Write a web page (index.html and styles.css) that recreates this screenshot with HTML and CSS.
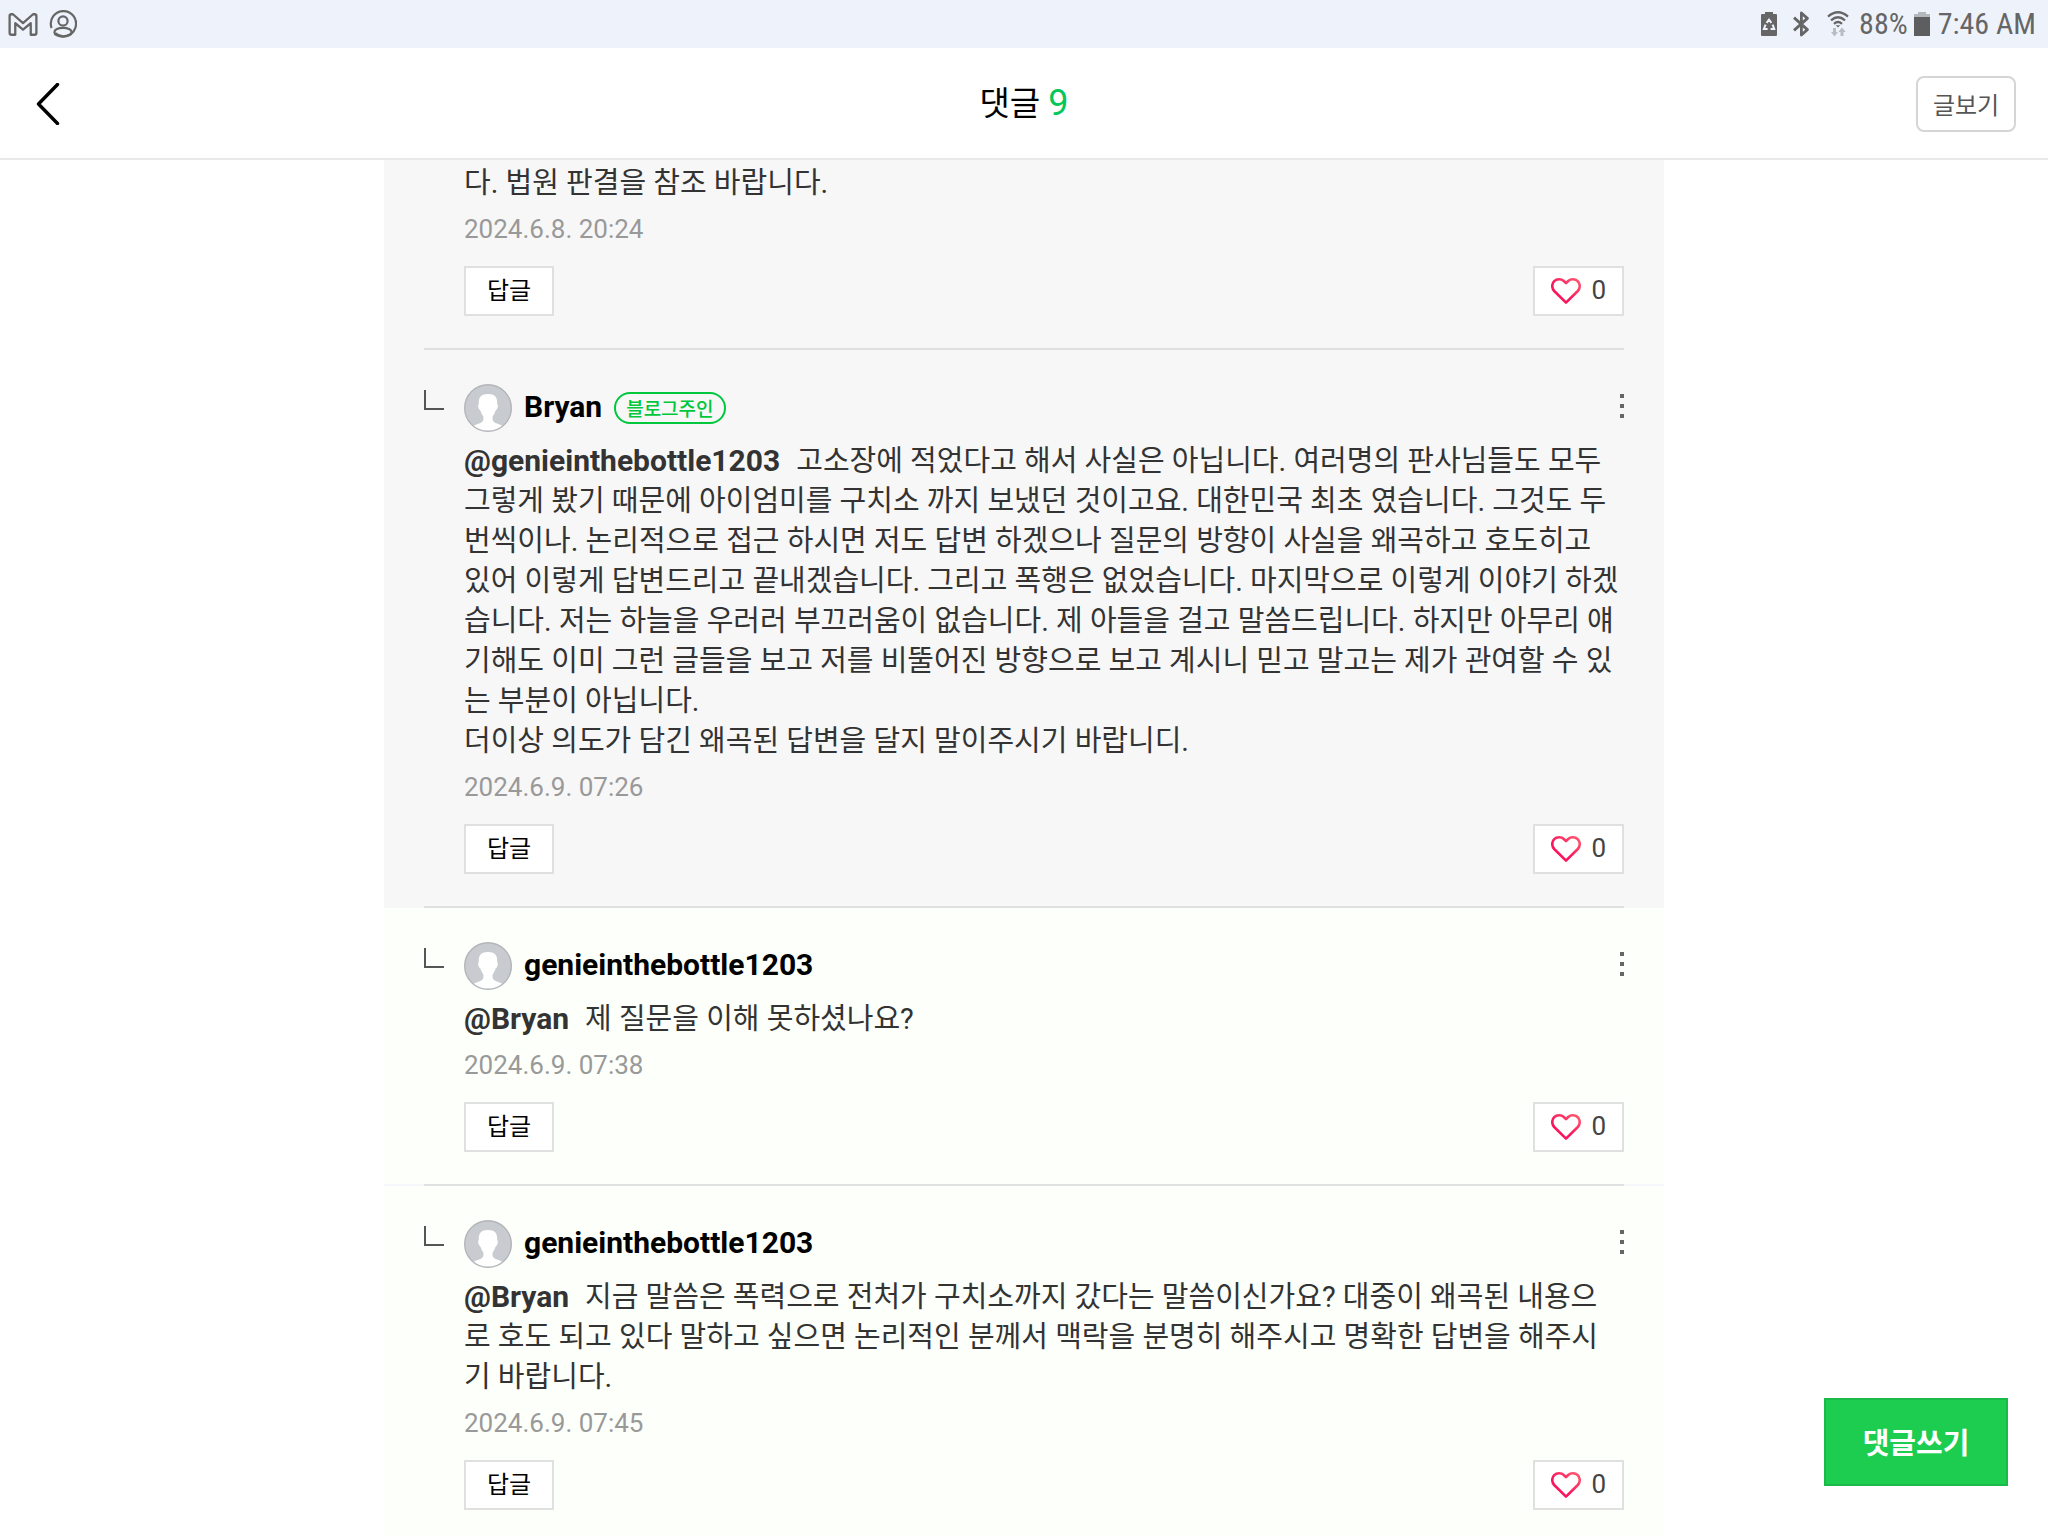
FILE: index.html
```html
<!DOCTYPE html>
<html lang="ko">
<head>
<meta charset="utf-8">
<meta name="viewport" content="width=device-width, initial-scale=1">
<title>댓글</title>
<link rel="stylesheet" href="styles.css">
</head>
<body>
<svg class="defs" aria-hidden="true">
  <defs>
    <linearGradient id="heart-fill" x1="0" y1="1" x2="1" y2="0">
      <stop offset="0.4" stop-color="#f9165e"/>
      <stop offset="1" stop-color="#ff5c70"/>
    </linearGradient>
    <symbol id="heart" viewBox="0 0 30 26">
      <path d="M15 24.600 3.200 13C.6 10.200.6 5.800 3.200 3.200 5.800.700 10.200.700 12.800 3L15 5.200 17.200 3C19.800.700 24.200.700 26.800 3.200 29.400 5.800 29.400 10.200 26.800 13Z" fill="none" stroke="url(#heart-fill)" stroke-width="2.600" stroke-linejoin="round"/>
    </symbol>
    <symbol id="avatar" viewBox="0 0 48 48">
      <circle cx="24" cy="24" r="23.500" fill="#c8cbd0"/>
      <path d="M24 10c7 0 9.500 3.500 9.200 10 .9.600.9 3.200-.2 5-.5.900-1 1.300-1.400 1.600-.7 2.500-1.800 4.500-3 5.800-.2 2.600-.1 4.600 1.600 5.800 2.300 1.500 6.100 2 8.800 3.800A23 23 0 0 1 9 42c2.700-1.800 6.500-2.300 8.800-3.800 1.700-1.200 1.800-3.200 1.600-5.800-1.200-1.300-2.300-3.300-3-5.800-.4-.3-.9-.7-1.400-1.600-1.100-1.800-1.100-4.400-.2-5C14.500 13.500 17 10 24 10Z" fill="#fff"/>
      <circle cx="24" cy="24" r="23.300" fill="none" stroke="#b4b6ba" stroke-width="1.400"/>
    </symbol>
  </defs>
</svg>

<div class="status">
  <div class="status-group">
    <svg class="icon-mail" viewBox="0 0 28 22" aria-label="메일"><path d="M1.200 18.800V2.800Q1.200 1.200 3 1.200H4.400L14 9.600 23.600 1.200H25Q26.800 1.200 26.800 2.800V18.800Q26.800 20.800 24.800 20.800H21.400V9.800L14 16 6.600 9.800V20.800H3.200Q1.200 20.800 1.200 18.800Z" fill="none" stroke="#666" stroke-width="2.200" stroke-linejoin="round"/></svg>
    <svg class="icon-account" viewBox="0 0 28 28" fill="none" stroke="#666" stroke-width="2.200" aria-label="계정"><path d="M2.600 18A12.600 12.600 0 1 1 6.200 23.200"/><circle cx="14" cy="11" r="4.600"/><ellipse cx="14" cy="22.200" rx="8.600" ry="4.400"/></svg>
  </div>
  <div class="status-group status-right">
    <svg class="icon-saver" viewBox="0 0 16 24" aria-label="절전"><path d="M4 0h8v2h3q1 0 1 1v20q0 1-1 1H1q-1 0-1-1V3q0-1 1-1h3Z" fill="#666"/><path d="M5.600 10.800 8 7.600l2.400 3.200M11.600 12.600l1.600 4.400H9.600M6.600 17H2.900l1.700-4.400" fill="none" stroke="#eef3fb" stroke-width="2"/></svg>
    <svg class="icon-bluetooth" viewBox="0 0 16 26" aria-label="블루투스"><path d="M1 6.600 14.400 18.600 8.400 24V2L14.400 7.400 1 19.400" fill="none" stroke="#666" stroke-width="2.800" stroke-linejoin="round"/></svg>
    <svg class="icon-wifi" viewBox="0 0 22 26" aria-label="와이파이"><path d="M1 5.600Q11-3 21 5.600M4 9.400Q11 3.200 18 9.400M7 12.800Q11 9.200 15 12.800" fill="none" stroke="#666" stroke-width="2.300"/><path d="m8.800 14.200h4.400L11 16.600Z" fill="#666"/><path d="M6 17h3v4h2l-3.500 4.400L4 21h2ZM13.500 25h3v-4h2.300L15 16.600 11.300 21h2.200Z" fill="#b9bcc1"/></svg>
    <span>88%</span>
    <svg class="icon-battery" viewBox="0 0 16 24" aria-label="배터리"><path d="M4 0h8v2h4v3H0V2h4Z" fill="#b4b7bc"/><path d="M0 5h16v19H0Z" fill="#5d5e60"/></svg>
    <span>7:46 AM</span>
  </div>
</div>

<header class="header">
  <button class="back" type="button" aria-label="뒤로"><svg viewBox="0 0 24 42"><path d="M21.500 1.500 2.500 21 21.500 40.500" fill="none" stroke="#000" stroke-width="3.400" stroke-linecap="round" stroke-linejoin="round"/></svg></button>
  <h1 class="title">댓글 <span class="count">9</span></h1>
  <button class="view-post" type="button">글보기</button>
</header>

<main class="content">
  <ul class="comments">
    <li class="comment comment-cut">
      <p class="text">다. 법원 판결을 참조 바랍니다.</p>
      <time class="date">2024.6.8. 20:24</time>
      <div class="actions"><button class="reply" type="button">답글</button><button class="like" type="button" aria-label="좋아요 0"><svg><use href="#heart"/></svg><span>0</span></button></div>
    </li>
    <li class="comment">
      <div class="author"><i class="branch"></i><svg class="avatar"><use href="#avatar"/></svg><b class="name">Bryan</b><span class="badge">블로그주인</span><button class="more" type="button" aria-label="더보기"><i></i><i></i><i></i></button></div>
      <p class="text"><a class="mention" href="#">@genieinthebottle1203</a>고소장에 적었다고 해서 사실은 아닙니다. 여러명의 판사님들도 모두 그렇게 봤기 때문에 아이엄미를 구치소 까지 보냈던 것이고요. 대한민국 최초 였습니다. 그것도 두번씩이나. 논리적으로 접근 하시면 저도 답변 하겠으나 질문의 방향이 사실을 왜곡하고 호도히고 있어 이렇게 답변드리고 끝내겠습니다. 그리고 폭행은 없었습니다. 마지막으로 이렇게 이야기 하겠습니다. 저는 하늘을 우러러 부끄러움이 없습니다. 제 아들을 걸고 말씀드립니다. 하지만 아무리 얘기해도 이미 그런 글들을 보고 저를 비뚤어진 방향으로 보고 계시니 믿고 말고는 제가 관여할 수 있는 부분이 아닙니다.<br>더이상 의도가 담긴 왜곡된 답변을 달지 말이주시기 바랍니디.</p>
      <time class="date">2024.6.9. 07:26</time>
      <div class="actions"><button class="reply" type="button">답글</button><button class="like" type="button" aria-label="좋아요 0"><svg><use href="#heart"/></svg><span>0</span></button></div>
    </li>
    <li class="comment mine">
      <div class="author"><i class="branch"></i><svg class="avatar"><use href="#avatar"/></svg><b class="name">genieinthebottle1203</b><button class="more" type="button" aria-label="더보기"><i></i><i></i><i></i></button></div>
      <p class="text"><a class="mention" href="#">@Bryan</a>제 질문을 이해 못하셨나요?</p>
      <time class="date">2024.6.9. 07:38</time>
      <div class="actions"><button class="reply" type="button">답글</button><button class="like" type="button" aria-label="좋아요 0"><svg><use href="#heart"/></svg><span>0</span></button></div>
    </li>
    <li class="comment mine">
      <div class="author"><i class="branch"></i><svg class="avatar"><use href="#avatar"/></svg><b class="name">genieinthebottle1203</b><button class="more" type="button" aria-label="더보기"><i></i><i></i><i></i></button></div>
      <p class="text"><a class="mention" href="#">@Bryan</a>지금 말씀은 폭력으로 전처가 구치소까지 갔다는 말씀이신가요? 대중이 왜곡된 내용으로 호도 되고 있다 말하고 싶으면 논리적인 분께서 맥락을 분명히 해주시고 명확한 답변을 해주시기 바랍니다.</p>
      <time class="date">2024.6.9. 07:45</time>
      <div class="actions"><button class="reply" type="button">답글</button><button class="like" type="button" aria-label="좋아요 0"><svg><use href="#heart"/></svg><span>0</span></button></div>
    </li>
  </ul>
</main>

<button class="write" type="button">댓글쓰기</button>
</body>
</html>
```
FILE: styles.css
```css
* {
  box-sizing: border-box;
}

body {
  display: flex;
  flex-direction: column;
  height: 100vh;
  margin: 0;
  overflow: hidden;
  background: #fff;
  color: #333;
  font-family: Roboto, "Noto Sans CJK KR", sans-serif;
  font-size: 29px;
}

button {
  margin: 0;
  padding: 0;
  border: 0;
  background: none;
  color: inherit;
  font: inherit;
}

svg {
  display: block;
}

.defs {
  position: absolute;
  width: 0;
  height: 0;
}

/* Device status bar */
.status {
  display: flex;
  flex: none;
  justify-content: space-between;
  height: 48px;
  padding: 0 12px 0 8px;
  background: #eef3fb;
  color: #666;
  font-family: "Roboto Condensed", Roboto, sans-serif;
  font-stretch: condensed;
  font-size: 30px;
  line-height: 48px;
}

.status-group {
  display: flex;
  align-items: center;
  gap: 11px;
}

.status-right {
  gap: 8px;
}

.icon-mail { width: 30px; height: 23px; }
.icon-account { width: 28px; height: 28px; }
.icon-saver { width: 16px; height: 24px; }
.icon-bluetooth { width: 16px; height: 26px; margin: 0 10px 0 8px; }
.icon-wifi { width: 22px; height: 26px; margin-right: 2px; }
.icon-battery { width: 16px; height: 24px; margin-left: -2px; }

/* Page header */
.header {
  display: grid;
  flex: none;
  grid-template-columns: 1fr auto 1fr;
  align-items: center;
  height: 112px;
  padding: 2px 32px 0 36px;
  border-bottom: 2px solid #e9e9e9;
}

.back {
  justify-self: start;
}

.back svg {
  width: 24px;
  height: 42px;
}

.title {
  margin: 0;
  padding: 0 4px 2px 0;
  color: #000;
  font-size: 33px;
  font-weight: 400;
  line-height: 48px;
}

.count {
  color: #03c75a;
  font-size: 36px;
}

.view-post {
  justify-self: end;
  width: 100px;
  height: 56px;
  padding-bottom: 2px;
  border: 2px solid #d5d5d5;
  border-radius: 8px;
  color: #555;
  font-size: 24px;
}

/* Comment list */
.content {
  flex: 1;
  min-height: 0;
}

.comments {
  max-width: 1280px;
  margin: 0 auto;
  padding: 0;
  list-style: none;
}

.comment {
  padding: 0 40px 32px 80px;
  background: #f7f7f7;
}

.comment.mine {
  background: #fdfffa;
}

.comment:not(.mine) + .mine {
  background: linear-gradient(#f7f7f7 2px, #fdfffa 2px);
}

.mine + .mine {
  background: linear-gradient(#f5f7fa 2px, #fdfffa 2px);
}

.comment-cut {
  padding-top: 2px;
}

.author {
  display: flex;
  align-items: center;
  height: 92px;
  margin-left: -40px;
  padding: 34px 0 10px;
  border-top: 2px solid #e0e0e0;
}

.branch {
  align-self: flex-start;
  width: 20px;
  height: 20px;
  margin: 6px 20px 0 0;
  border: solid #555;
  border-width: 0 0 2px 2px;
}

.avatar {
  align-self: flex-start;
  width: 48px;
  height: 48px;
  margin-right: 12px;
}

.name {
  color: #000;
  font-size: 30px;
  line-height: 46px;
}

.badge {
  align-self: flex-start;
  height: 32px;
  margin: 8px 0 0 12px;
  padding: 0 10px;
  border: 2px solid #00c73c;
  border-radius: 16px;
  color: #00c73c;
  font-size: 19px;
  font-weight: 500;
  line-height: 31px;
}

.more {
  display: flex;
  flex-direction: column;
  gap: 6px;
  margin-left: auto;
  padding-bottom: 2px;
}

.more i {
  width: 4px;
  height: 4px;
  background: #666;
}

.text {
  margin: 0;
  padding: 1px 2px 0 0;
  line-height: 40px;
  word-break: break-all;
}

.mention {
  margin-right: 16px;
  color: inherit;
  font-size: 30px;
  font-weight: 700;
  line-height: 30px;
  text-decoration: none;
}

.date {
  display: block;
  margin-top: 8px;
  color: #999;
  font-size: 26px;
  line-height: 36px;
}

.actions {
  display: flex;
  justify-content: space-between;
  margin-top: 19px;
}

.reply,
.like {
  height: 50px;
  border: 2px solid #e0e0e0;
  background: #fff;
}

.reply {
  width: 90px;
  padding-bottom: 6px;
  color: #000;
  font-size: 24px;
}

.like {
  display: flex;
  align-items: center;
  gap: 10px;
  padding: 0 16px;
  color: #444;
  font-size: 26px;
}

.like span {
  padding-bottom: 2px;
}

.like svg {
  width: 30px;
  height: 26px;
}

.write {
  position: fixed;
  right: 40px;
  bottom: 50px;
  width: 184px;
  height: 88px;
  padding-bottom: 2px;
  border: 2px solid #1ab94a;
  background: #1ccd50;
  color: #fff;
  font-size: 29px;
  font-weight: 700;
}
```
